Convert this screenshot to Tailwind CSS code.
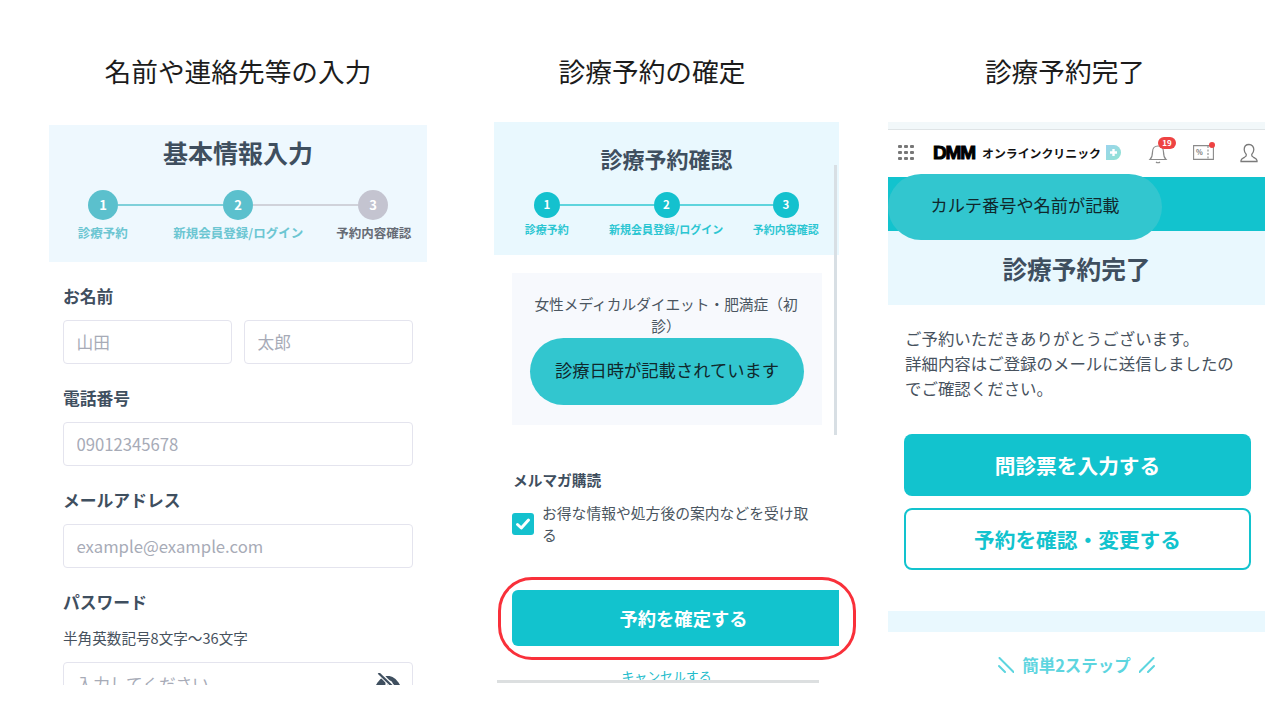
<!DOCTYPE html>
<html lang="ja">
<head>
  <meta charset="UTF-8" />
  <title>診療予約の流れ</title>
  <script src="https://cdn.jsdelivr.net/npm/@tailwindcss/browser@4"></script>
</head>
<body class="bg-white overflow-hidden font-['Noto_Sans_CJK_JP','Noto_Sans',sans-serif] text-[#3f4f5f]">
  <div class="flex items-start w-[1280px] h-[720px]">

    <!-- Column 1: basic info -->
    <section class="ml-[49px] w-[378px] shrink-0">
      <h2 class="h-[125px] pt-[51px] text-center text-[26.7px] leading-[40px] font-normal text-[#1c1c1c]">名前や連絡先等の入力</h2>
      <div class="h-[560px] overflow-hidden">
        <div class="h-[137px] bg-[#eef8fe] overflow-hidden">
          <h1 class="mt-[9px] text-center text-[25px] leading-[36px] font-bold">基本情報入力</h1>
          <div class="mt-[20px] ml-[39px] flex items-center w-[300px]">
            <div class="w-[30px] h-[30px] rounded-full bg-[#5bc0cd] text-white text-[13px] font-bold flex items-center justify-center shrink-0">1</div>
            <div class="flex-1 h-[2px] bg-[#7fd0da]"></div>
            <div class="w-[30px] h-[30px] rounded-full bg-[#5bc0cd] text-white text-[13px] font-bold flex items-center justify-center shrink-0">2</div>
            <div class="flex-1 h-[2px] bg-[#d0d2da]"></div>
            <div class="w-[30px] h-[30px] rounded-full bg-[#c4c4d0] text-white text-[13px] font-bold flex items-center justify-center shrink-0">3</div>
          </div>
          <div class="mt-[3px] -ml-[14px] grid grid-cols-[repeat(3,135.5px)] text-center text-[12.5px] leading-[20px] font-bold whitespace-nowrap">
            <span class="text-[#6cc6d2]">診療予約</span>
            <span class="text-[#6cc6d2]">新規会員登録/ログイン</span>
            <span class="text-[#666b75]">予約内容確認</span>
          </div>
        </div>
        <form class="px-[14px] pt-[22px]">
          <label class="block text-[16.8px] leading-[24px] font-bold">お名前</label>
          <div class="mt-[12px] grid grid-cols-2 gap-[12px]">
            <input placeholder="山田" class="w-full h-[44px] px-[12.5px] border-[1.5px] border-[#e4e4ee] rounded-[4px] text-[16.7px] placeholder:text-[#a7abb7]">
            <input placeholder="太郎" class="w-full h-[44px] px-[12.5px] border-[1.5px] border-[#e4e4ee] rounded-[4px] text-[16.7px] placeholder:text-[#a7abb7]">
          </div>
          <label class="block mt-[22px] text-[16.8px] leading-[24px] font-bold">電話番号</label>
          <input placeholder="09012345678" class="block mt-[12px] w-full h-[44px] px-[12.5px] border-[1.5px] border-[#e4e4ee] rounded-[4px] text-[16.7px] placeholder:text-[#a7abb7]">
          <label class="block mt-[22px] text-[16.8px] leading-[24px] font-bold">メールアドレス</label>
          <input placeholder="example@example.com" class="block mt-[12px] w-full h-[44px] px-[12.5px] border-[1.5px] border-[#e4e4ee] rounded-[4px] text-[16.7px] placeholder:text-[#a7abb7]">
          <label class="block mt-[22px] text-[16.8px] leading-[24px] font-bold">パスワード</label>
          <p class="mt-[14px] text-[14.6px] leading-[20px] text-[#47525e]">半角英数記号8文字〜36文字</p>
          <div class="relative mt-[14px]">
            <input placeholder="入力してください" class="block w-full h-[44px] px-[12.5px] border-[1.5px] border-[#e4e4ee] rounded-[4px] text-[16.7px] placeholder:text-[#a7abb7]">
            <svg class="absolute right-[12px] top-[11px] w-[26px] h-[22px]" viewBox="0 0 26 22" fill="#3f4f5f">
              <path d="M1 12C5 5 9 3 13 3s8 2 12 9c-4 7-8 9-12 9S5 19 1 12z"/>
              <circle cx="14" cy="11" r="3.6" fill="#fff"/>
              <circle cx="14" cy="11" r="1.8"/>
              <path d="M4 0l14 14" stroke="#fff" stroke-width="4.5"/>
              <path d="M3.5 0l14.5 14" stroke="#3f4f5f" stroke-width="2.2"/>
            </svg>
          </div>
        </form>
      </div>
    </section>

    <!-- Column 2: confirm -->
    <section class="ml-[67px] w-[345px] shrink-0">
      <h2 class="h-[122px] pt-[51px] pr-[29px] text-center text-[26.7px] leading-[40px] font-normal text-[#1c1c1c]">診療予約の確定</h2>
      <div class="relative">
        <div class="h-[133px] bg-[#e9f8fe] overflow-hidden">
          <h1 class="mt-[20px] text-center text-[22px] leading-[32px] font-bold">診療予約確認</h1>
          <div class="mt-[18px] ml-[40px] flex items-center w-[265px]">
            <div class="w-[26px] h-[26px] rounded-full bg-[#14c1ce] text-white text-[11.5px] font-bold flex items-center justify-center shrink-0">1</div>
            <div class="flex-1 h-[1.5px] bg-[#5ed4dd]"></div>
            <div class="w-[26px] h-[26px] rounded-full bg-[#14c1ce] text-white text-[11.5px] font-bold flex items-center justify-center shrink-0">2</div>
            <div class="flex-1 h-[1.5px] bg-[#5ed4dd]"></div>
            <div class="w-[26px] h-[26px] rounded-full bg-[#14c1ce] text-white text-[11.5px] font-bold flex items-center justify-center shrink-0">3</div>
          </div>
          <div class="mt-[2px] grid grid-cols-[repeat(3,119.5px)] -ml-[7px] text-center text-[11px] leading-[18px] font-bold whitespace-nowrap text-[#2cc6d2]">
            <span>診療予約</span>
            <span>新規会員登録/ログイン</span>
            <span>予約内容確認</span>
          </div>
        </div>
        <div class="mt-[18px] mx-[18px] w-[310px] h-[152px] bg-[#f7f9fd] px-[18px] pt-[20px]">
          <p class="pr-[2px] text-center text-[14.7px] leading-[22px] text-[#4a5560]">女性メディカルダイエット・肥満症（初診）</p>
          <div class="mt-px h-[67px] pb-[4px] rounded-full bg-[#32c6cf] flex items-center justify-center text-[17.3px] text-[#10282c]">診療日時が記載されています</div>
        </div>
        <div class="mt-[44px] ml-[19px] text-[14.7px] leading-[22px] font-bold">メルマガ購読</div>
        <div class="mt-[11px] ml-[18px] flex items-center gap-[8px]">
          <div class="w-[22px] h-[22px] rounded-[3px] bg-[#14c1ce] flex items-center justify-center shrink-0">
            <svg class="w-[16px] h-[16px]" viewBox="0 0 16 16" fill="none" stroke="#fff" stroke-width="3" stroke-linecap="round" stroke-linejoin="round"><path d="M2.5 8.5l3.8 3.5L13.5 4"/></svg>
          </div>
          <p class="w-[270px] text-[14.8px] leading-[22px] text-[#4a5560]">お得な情報や処方後の案内などを受け取る</p>
        </div>
        <div class="relative mt-[44px] ml-[18px]">
          <button class="w-[327px] h-[56px] pl-[16px] pt-[1px] rounded-l-[6px] bg-[#12c3ce] text-white text-[18.3px] font-bold">予約を確定する</button>
          <div class="absolute -left-[14px] -top-[13px] w-[358px] h-[83px] border-[3.5px] border-[#f9303a] rounded-[34px]"></div>
        </div>
        <div class="mt-[20px] text-center text-[12.9px] leading-[20px] text-[#22bccb]">キャンセルする</div>
        <div class="absolute left-[3px] top-[558px] w-[322px] h-[3px] bg-[#dcdfe0]"></div>
        <div class="absolute left-[340px] top-[43px] w-[3px] h-[270px] bg-[#d8dfe4]"></div>
      </div>
    </section>

    <!-- Column 3: done -->
    <section class="ml-[49px] w-[377px] shrink-0">
      <h2 class="h-[122px] pt-[51px] pr-[23px] text-center text-[26.7px] leading-[40px] font-normal text-[#1c1c1c]">診療予約完了</h2>
      <div class="h-[8px] bg-[#f2f8fa] border-b border-[#dfe4e6]"></div>
      <header class="h-[47px] pb-[2px] flex items-center pl-[10px]">
        <div class="grid grid-cols-3 gap-[2.5px] w-[16px]">
          <i class="w-[3.6px] h-[3.6px] rounded-[1px] bg-[#777]"></i><i class="w-[3.6px] h-[3.6px] rounded-[1px] bg-[#777]"></i><i class="w-[3.6px] h-[3.6px] rounded-[1px] bg-[#777]"></i>
          <i class="w-[3.6px] h-[3.6px] rounded-[1px] bg-[#777]"></i><i class="w-[3.6px] h-[3.6px] rounded-[1px] bg-[#777]"></i><i class="w-[3.6px] h-[3.6px] rounded-[1px] bg-[#777]"></i>
          <i class="w-[3.6px] h-[3.6px] rounded-[1px] bg-[#777]"></i><i class="w-[3.6px] h-[3.6px] rounded-[1px] bg-[#777]"></i><i class="w-[3.6px] h-[3.6px] rounded-[1px] bg-[#777]"></i>
        </div>
        <span class="ml-[19px] w-[45px] font-['Liberation_Sans',sans-serif] font-bold text-[19px] leading-none tracking-[-1.2px] text-black [-webkit-text-stroke:1px_black]">DMM</span>
        <span class="ml-[4px] text-[11.9px] font-bold text-[#111] whitespace-nowrap">オンラインクリニック</span>
        <svg class="ml-[5px] w-[15px] h-[15px]" viewBox="0 0 15 15">
          <defs><linearGradient id="d" x1="0" y1="0" x2="1" y2="1"><stop offset="0" stop-color="#9cd4ee"/><stop offset="1" stop-color="#8fe3d0"/></linearGradient></defs>
          <path d="M0 0h8a7 7.5 0 0 1 0 15H0z" fill="url(#d)"/>
          <path d="M7.5 4v7M4 7.5h7" stroke="#fff" stroke-width="2.4"/>
        </svg>
        <div class="relative ml-[27px] w-[20px] h-[22px]">
          <svg class="w-[20px] h-[22px]" viewBox="0 0 20 22" fill="none" stroke="#8a8a8a" stroke-width="1.2"><path d="M2 17.5c2-2 2.5-4 2.5-7.500s2-6 5.500-6 5.500 2.500 5.500 6 .5 5.500 2.500 7.500z"/><path d="M8 20c1 1 3 1 4 0"/></svg>
          <span class="absolute -top-[5px] left-[10px] w-[18px] h-[12px] rounded-full bg-[#ee4343] text-white text-[8px] leading-[12px] font-bold text-center">19</span>
        </div>
        <div class="relative ml-[25px] w-[21px] h-[15px]">
          <svg class="w-[21px] h-[15px]" viewBox="0 0 21 15" fill="none" stroke="#8a8a8a" stroke-width="1.1"><path d="M.6.6h19.8v13.8H.6z"/><path d="M15 1v13" stroke-dasharray="2 1.5"/></svg>
          <span class="absolute left-[3px] top-[2px] text-[7px] leading-[11px] font-bold text-[#777]">%</span>
          <span class="absolute -top-[3px] -right-[1px] w-[6px] h-[6px] rounded-full bg-[#ee4343]"></span>
        </div>
        <svg class="ml-[26px] w-[18px] h-[20px]" viewBox="0 0 18 20" fill="none" stroke="#7a7a7a" stroke-width="1.3"><path d="M9 1.5c-3 0-4.800 2.200-4.800 5 0 2.200.9 3.800 2.100 5 .4 1.300-.3 2-1.800 2.800-2 1-3.500 1.500-3.500 3.200v1h16v-1c0-1.700-1.500-2.200-3.500-3.200-1.500-.8-2.200-1.500-1.800-2.800 1.200-1.200 2.100-2.800 2.100-5 0-2.800-1.800-5-4.800-5z"/></svg>
      </header>
      <div class="relative h-[54px] bg-[#12c3ce]">
        <div class="absolute left-0 -top-[3px] w-[274px] h-[66px] pb-[4px] rounded-full bg-[#32c6cf] flex items-center justify-center text-[17.2px] text-[#10282c]">カルテ番号や名前が記載</div>
      </div>
      <div class="h-[74px] bg-[#e9f8fe] flex items-center justify-center">
        <h1 class="text-[24.7px] leading-[36px] font-bold">診療予約完了</h1>
      </div>
      <p class="mt-[21px] ml-[17px] text-[16.45px] leading-[25px] text-[#47525e]">ご予約いただきありがとうございます。<br>詳細内容はご登録のメールに送信しましたの<br>でご確認ください。</p>
      <button class="block mt-[33px] ml-[16px] w-[347px] h-[62px] pt-[1px] rounded-[8px] bg-[#12c3ce] text-white text-[20.7px] font-bold">問診票を入力する</button>
      <button class="block mt-[12px] ml-[16px] w-[347px] h-[62px] pt-[1px] rounded-[8px] border-2 border-[#12c3ce] bg-white text-[#12c3ce] text-[20.7px] font-bold">予約を確認・変更する</button>
      <div class="mt-[41px] h-[21px] bg-[#e9f8fe]"></div>
      <div class="mt-[21px] flex items-center justify-center gap-[8px] text-[16.5px] leading-[24px] font-bold text-[#5dd5df]">
        <svg class="w-[16px] h-[16px]" viewBox="0 0 16 16" fill="none" stroke="#5dd5df" stroke-width="2" stroke-linecap="round"><path d="M1.5 1l14 14M1 9l6 6"/></svg>
        <span>簡単2ステップ</span>
        <svg class="w-[16px] h-[16px]" viewBox="0 0 16 16" fill="none" stroke="#5dd5df" stroke-width="2" stroke-linecap="round"><path d="M14.5 1l-14 14M15 9l-6 6"/></svg>
      </div>
    </section>
  </div>
</body>
</html>
